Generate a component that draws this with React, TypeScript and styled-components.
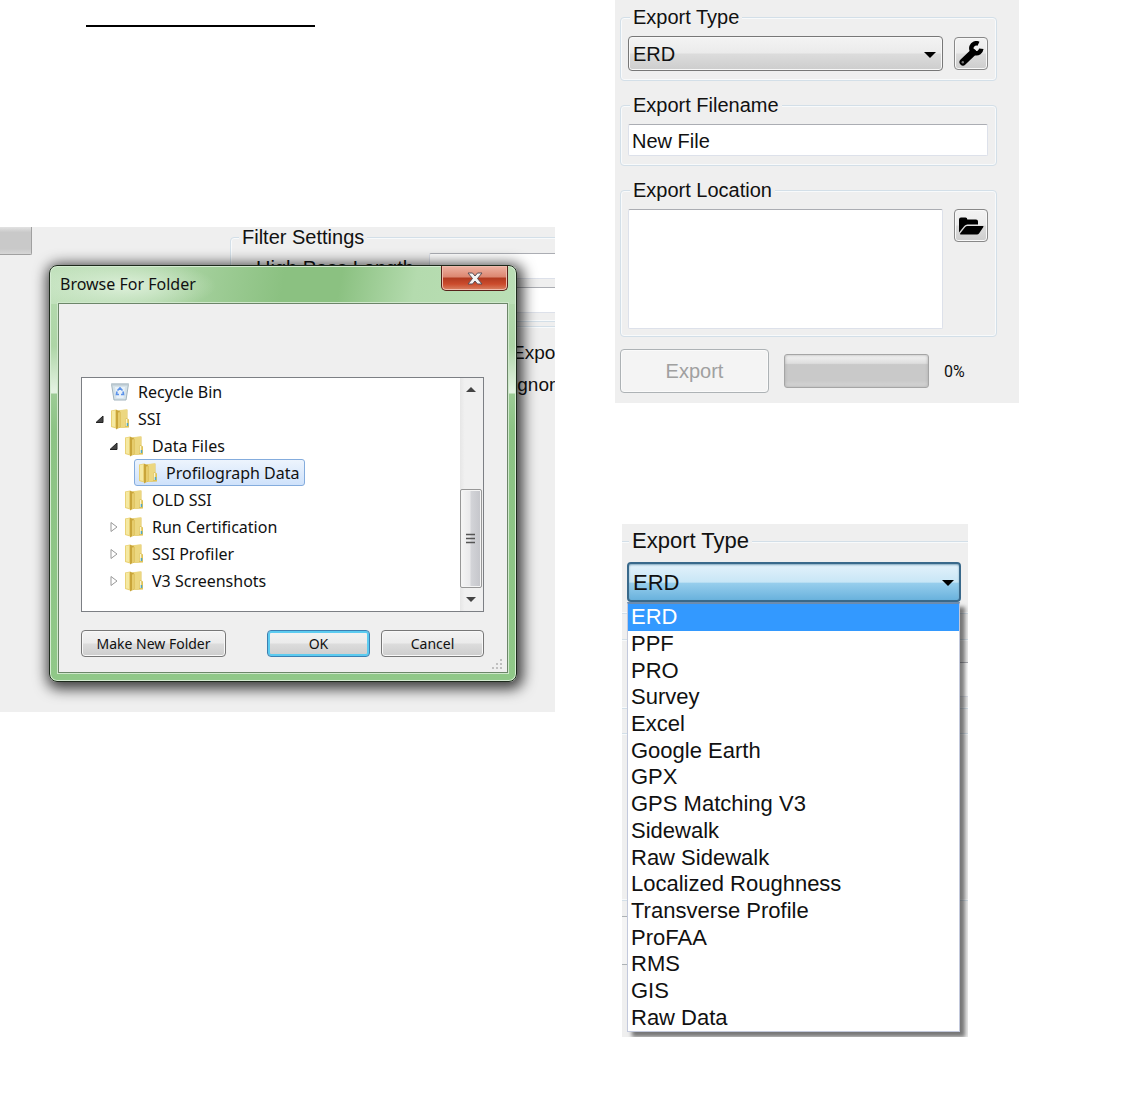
import React from "react";
import styled, { createGlobalStyle, css } from "styled-components";

const arial = `"Liberation Sans", Arial, sans-serif`;
const shell = `"Noto Sans", "Open Sans", sans-serif`;
const face = "#efefef";
const etched = "#d3dfe8";

const GlobalStyle = createGlobalStyle`
  *, *::before, *::after { box-sizing: border-box; }
  body { margin: 0; background: #fff; color: #111; font-family: ${arial}; }
  button, input, select, textarea { font: inherit; color: inherit; margin: 0; }
`;

const Page = styled.main`
  display: grid;
  grid-template-columns: minmax(0, 555fr) minmax(0, 528fr);
  column-gap: 60px;
  align-items: start;
`;

const Column = styled.div`
  display: flex;
  flex-direction: column;
`;

/* ---------- shared form parts ---------- */

const Group = styled.fieldset<{ $pad?: string }>`
  margin: 0;
  min-width: 0;
  padding: ${(p) => p.$pad ?? "7px 8px 9px 7px"};
  border: 1px solid ${etched};
  border-radius: 4px;
  box-shadow: inset 0 0 0 1px #f8fafb;
`;

const Legend = styled.legend<{ $size?: number; $inset?: number }>`
  margin-left: ${(p) => p.$inset ?? 2}px;
  padding: 0 3px;
  background: ${face};
  font-size: ${(p) => p.$size ?? 20}px;
  line-height: 24px;
  white-space: nowrap;
`;

const raised = css`
  border: 1px solid #777;
  background: linear-gradient(#f3f3f3, #ebebeb 48%, #dcdcdc 52%, #cdcdcd);
  box-shadow: inset 0 0 0 1px #f8f8f8;
`;

const sunken = css`
  border: 1px solid #dde1ea;
  border-top-color: #abadb3;
  border-radius: 2px;
  background: #fff;
`;

const Row = styled.div<{ $top?: boolean }>`
  display: flex;
  align-items: ${(p) => (p.$top ? "flex-start" : "center")};
  gap: 11px;
`;

const ComboBox = styled.div`
  position: relative;
  flex: 1;
  min-width: 0;
`;

const Combo = styled.select<{ $open?: boolean }>`
  display: block;
  width: 100%;
  height: ${(p) => (p.$open ? 40 : 35)}px;
  padding: 0 4px;
  appearance: none;
  border-radius: 4px;
  font-size: ${(p) => (p.$open ? 22 : 20)}px;
  outline: none;
  ${raised}
  ${(p) =>
    p.$open &&
    css`
      border: 2px solid #39698b;
      background: linear-gradient(#e3f2fb, #c8e6f6 50%, #96cdec 54%, #69b2dd);
      box-shadow: inset 0 1px 2px #7fa6bd;
    `}
`;

const Caret = styled.svg`
  position: absolute;
  right: 7px;
  top: 50%;
  width: 12px;
  height: 6px;
  margin-top: -2px;
  pointer-events: none;
`;

const IconButton = styled.button`
  ${raised}
  display: flex;
  align-items: center;
  justify-content: center;
  flex: none;
  width: 34px;
  height: 33px;
  padding: 0;
  border-radius: 4px;
  border-color: #888;
`;

/* ---------- export panel ---------- */

const ExportPanel = styled.form`
  display: flex;
  flex-direction: column;
  gap: 12px;
  max-width: 404px;
  padding: 5px 22px 10px 5px;
  background: ${face};
`;

const TextBox = styled.input`
  ${sunken}
  display: block;
  width: 100%;
  height: 32px;
  padding: 2px 3px 0;
  font-size: 20px;
`;

const TextArea = styled.textarea`
  ${sunken}
  display: block;
  flex: 1;
  min-width: 0;
  height: 120px;
  resize: none;
`;

const ExportRow = styled.div`
  display: flex;
  align-items: center;
  gap: 15px;
`;

const ExportButton = styled.button`
  width: 149px;
  height: 44px;
  border: 1px solid #adb2b5;
  border-radius: 4px;
  background: #f4f4f4;
  box-shadow: inset 0 0 0 1px #fafafa;
  font-size: 20px;
  color: #a0a0a0;
`;

const Meter = styled.div`
  width: 145px;
  height: 34px;
  border: 1px solid #a5a5a5;
  border-radius: 3px;
  background: linear-gradient(#f4f4f4, #dedede 26%, #c9c9c9 30%, #c9c9c9 80%, #d6d6d6);
  box-shadow: inset 0 0 3px #aaa;
`;

const Percent = styled.span`
  font-family: Roboto, ${arial};
  font-size: 16px;
`;

/* ---------- open drop-down ---------- */

const DropPanel = styled.section`
  display: flex;
  flex-direction: column;
  gap: 1px;
  max-width: 346px;
  margin: 121px 0 0 7px;
  height: 513px;
  padding-top: 5px;
  overflow: hidden;
  background: ${face};
`;

const WideGroup = styled(Group)`
  position: relative;
  z-index: 1;
  margin: 0 -8px 24px -4px;
`;

const EmptyGroup = styled.div<{ $height: number }>`
  flex: none;
  height: ${(p) => p.$height}px;
  margin: 0 -8px 23px;
  padding: 22px 0 0 16px;
  border: 1px solid ${etched};
  box-shadow: inset 0 0 0 1px #f8fafb;
`;

const HiddenField = styled.div`
  ${sunken}
  height: 35px;
`;

const HiddenButton = styled.div`
  flex: none;
  width: 160px;
  height: 49px;
  margin: -9px 0 0 -8px;
  border: 1px solid #adb2b5;
  background: #f4f4f4;
`;

const Options = styled.ul`
  position: absolute;
  top: 100%;
  left: 0;
  right: 1px;
  display: flex;
  flex-direction: column;
  height: 430px;
  margin: 0;
  padding: 0;
  list-style: none;
  border: 1px solid #c3c9dc;
  border-top: 2px solid #6b8cb0;
  background: #fff;
  box-shadow: 5px 5px 4px rgba(0, 0, 0, 0.5);
`;

const Option = styled.li<{ $selected: boolean }>`
  display: flex;
  flex: 1;
  align-items: center;
  padding-left: 3px;
  font-size: 22px;
  line-height: 26px;
  color: ${(p) => (p.$selected ? "#fff" : "#111")};
  background: ${(p) => (p.$selected ? "#3399ff" : "transparent")};
`;

/* ---------- browse dialog ---------- */

const Rule = styled.hr`
  width: 229px;
  height: 2px;
  margin: 25px 0 0 86px;
  border: 0;
  background: #000;
`;

const Backdrop = styled.section`
  position: relative;
  display: flex;
  align-items: flex-start;
  height: 485px;
  margin-top: 200px;
  overflow: hidden;
  background: ${face};
`;

const MeterEnd = styled.div`
  flex: none;
  width: 32px;
  height: 28px;
  border: 1px solid #a0a0a0;
  border-width: 0 1px 1px 0;
  border-radius: 0 0 2px 0;
  background: linear-gradient(#e2e2e2, #c9c9c9 20%, #c9c9c9 80%, #d6d6d6);
`;

const Behind = styled.div`
  flex: none;
  width: 400px;
  margin: -2px 0 0 198px;
  font-size: 20px;
`;

const FilterRow = styled.label`
  display: grid;
  grid-template-columns: 173px 1fr;
  align-items: center;
  margin: 0 0 8px 25px;
  line-height: 26px;
  white-space: nowrap;
`;

const FilterLabel = styled.span`
  padding-top: 4px;
  line-height: 22px;
`;

const FilterInput = styled.input`
  ${sunken}
  width: 100%;
  height: 26px;
`;

const SideOptions = styled.div`
  margin-top: 4px;
  padding: 10px 0 0 282px;
  border-top: 1px solid ${etched};
  box-shadow: inset 0 1px 0 #f8fafb;
  font-size: 19px;
  line-height: 32px;
`;

const Dialog = styled.div`
  position: absolute;
  left: 49px;
  right: 38px;
  top: 38px;
  display: flex;
  flex-direction: column;
  padding: 0 8px 8px;
  border: 1px solid #1d2a1c;
  border-radius: 8px;
  background:
    radial-gradient(ellipse 90px 26px at 76px 20px, #dcefd9, transparent),
    linear-gradient(100deg, #c3e2be, #b0d7a9 22%, #8bc181 50%, #8bc181 62%, #b4dbae 78%, #bbdfb6) top / 100% 38px no-repeat,
    linear-gradient(#b7dcb1, #add5a6 80px, #e4f2e2 125px, #e4f2e2 127px, #9ccb95 128px, #8cc384 165px, #90c888);
  box-shadow:
    inset 0 0 0 1px #d5ecd2,
    2px 3px 14px 4px rgba(0, 0, 0, 0.75);
  font-family: ${shell};
  font-size: 16px;
`;

const TitleBar = styled.header`
  display: flex;
  justify-content: space-between;
  align-items: flex-start;
  height: 37px;
  padding-left: 2px;
`;

const Title = styled.h2`
  margin: 0;
  font-size: 16px;
  font-weight: 400;
  line-height: 36px;
`;

const CloseButton = styled.button`
  display: flex;
  align-items: center;
  justify-content: center;
  width: 67px;
  height: 25px;
  padding: 0;
  border: 1px solid #57221a;
  border-top: 0;
  border-radius: 0 0 5px 5px;
  background: linear-gradient(#eeb3a3, #dc8670 46%, #b13a20 50%, #cb4b2c 75%, #d98465);
  box-shadow: inset 0 0 0 1px #f0bcae;
`;

const Client = styled.div`
  display: flex;
  flex-direction: column;
  gap: 18px;
  padding: 73px 23px 15px 22px;
  border: 1px solid #6c8669;
  outline: 1px solid #cfe8cb;
  background: ${face};
  position: relative;
`;

const TreeBox = styled.div`
  display: flex;
  height: 235px;
  border: 1px solid #7c7f84;
  background: #fff;
`;

const Tree = styled.ul`
  flex: 1;
  min-width: 0;
  margin: 0;
  padding: 0;
  list-style: none;
`;

const Node = styled.li<{ $level: number }>`
  display: flex;
  align-items: center;
  height: 27px;
  padding-left: ${(p) => 12 + p.$level * 14}px;
`;

const Twisty = styled.svg`
  flex: none;
  width: 12px;
  height: 12px;
`;

const NodeLabel = styled.span<{ $selected?: boolean }>`
  display: flex;
  align-items: center;
  gap: 8px;
  height: 27px;
  padding: 0 4px 0 3px;
  border: 1px solid ${(p) => (p.$selected ? "#84acdd" : "transparent")};
  border-radius: 3px;
  background: ${(p) => (p.$selected ? "linear-gradient(#edf4fd, #cfe2fb)" : "none")};
  line-height: 24px;
  white-space: nowrap;
`;

const Glyph = styled.svg`
  flex: none;
  width: 20px;
  height: 22px;
`;

const ScrollBar = styled.div`
  display: flex;
  flex-direction: column;
  width: 23px;
  padding-right: 1px;
  background: linear-gradient(90deg, #e6e6e6, #f0f0f0 20%);
`;

const ScrollButton = styled.button`
  display: flex;
  align-items: center;
  justify-content: center;
  height: 23px;
  padding: 0;
  border: 0;
  background: transparent;
`;

const ScrollTrack = styled.div`
  display: flex;
  flex: 1;
  align-items: flex-end;
`;

const Thumb = styled.div`
  display: flex;
  align-items: center;
  justify-content: center;
  width: 100%;
  height: 99px;
  border: 1px solid #979797;
  border-radius: 2px;
  background: linear-gradient(90deg, #f5f5f5, #e9e9eb 45%, #d3d4d8 50%, #c4c5ca);
  box-shadow: inset 0 0 0 1px #f4f4f4;
`;

const Actions = styled.div`
  display: flex;
  gap: 11px;
`;

const Button = styled.button<{ $primary?: boolean; $wide?: boolean }>`
  ${raised}
  width: ${(p) => (p.$wide ? 145 : 103)}px;
  height: 27px;
  padding: 0;
  border-radius: 4px;
  font-size: 14px;
  line-height: 20px;
  white-space: nowrap;
  margin-right: ${(p) => (p.$wide ? "auto" : "0")};
  ${(p) =>
    p.$primary &&
    css`
      border-color: #3c7fb1;
      box-shadow: inset 0 0 0 2px #5ccbf0;
    `}
`;

const Grip = styled.svg`
  position: absolute;
  right: 4px;
  bottom: 2px;
  width: 12px;
  height: 12px;
`;

const DownCaret = () => (
  <Caret viewBox="0 0 12 6" aria-hidden="true">
    <path d="M0 0h12L6 6z" fill="#000" />
  </Caret>
);

const WrenchIcon = () => (
  <svg width="26" height="26" viewBox="0 0 26 26" aria-hidden="true">
    <path d="M5 21 15 11.500" stroke="#000" strokeWidth="7" strokeLinecap="round" />
    <path d="M20.500 2.700A5 5 0 1 0 23.300 7.800" fill="none" stroke="#000" strokeWidth="4.500" />
    <circle cx="4.800" cy="21.200" r="1.200" fill="#777" />
  </svg>
);

const OpenFolderIcon = () => (
  <svg width="26" height="20" viewBox="0 0 26 20" aria-hidden="true">
    <path
      d="M1 3.500Q1 1.500 3 1.500H7.500Q9.300 1.500 9.300 3.500H18Q20 3.500 20 5.500V8.500H9.500Q7.500 8.500 6.300 10L1 16.500z"
      fill="#000"
    />
    <path d="M9.500 10H25Q26 10 25.200 11.200L21 17.500Q20.300 18.500 19 18.500H2.500Q1.500 18.300 2.300 17.300L7 11.300Q8 10 9.500 10z" fill="#000" />
  </svg>
);

const FolderIcon = () => (
  <Glyph viewBox="0 0 20 22" aria-hidden="true">
    <path d="M7 2.500 17.500 1.500v9l1.500 1v8L8 20z" fill="#dfc258" />
    <path d="M10 2l7-.500V10l-2 1v8l-5 1z" fill="#ecd780" />
    <path d="M1 2.500 6 1.500v19L1 19z" fill="#ead276" />
    <path d="M6 1.500 10.500 4v15L6 21.500z" fill="#c9a53a" />
    <path d="M2 3l3-.500V19l-3-.700z" fill="#f5e9a2" />
    <path d="M8 4.500 10.500 4v15L8 20.500z" fill="#e6cc6c" />
    <path d="M16.500 11v7" stroke="#f9f4d0" strokeWidth="1.500" />
    <path d="M17.500 15v3" stroke="#4fa8c8" strokeWidth="1.500" />
  </Glyph>
);

const BinIcon = () => (
  <Glyph viewBox="0 0 20 22" aria-hidden="true">
    <path d="M1.500 3h17l-2.500 16H4z" fill="#d5e2e9" stroke="#a3b4bd" />
    <path d="M1 2.500h18v2H1z" fill="#b9c7cf" />
    <path d="M5 6h10l-1.500 11h-7z" fill="#e8f1f8" />
    <path
      d="M7.500 9.500 10 7l2.500 2.500M13 10.500l.5 3H11M9 13.500H6.500l.5-3"
      fill="none"
      stroke="#5b92ea"
      strokeWidth="1.600"
    />
  </Glyph>
);

type TreeItem = {
  name: string;
  level: number;
  state?: "open" | "closed";
  bin?: boolean;
  selected?: boolean;
};

const tree: TreeItem[] = [
  { name: "Recycle Bin", level: 0, bin: true },
  { name: "SSI", level: 0, state: "open" },
  { name: "Data Files", level: 1, state: "open" },
  { name: "Profilograph Data", level: 2, selected: true },
  { name: "OLD SSI", level: 1 },
  { name: "Run Certification", level: 1, state: "closed" },
  { name: "SSI Profiler", level: 1, state: "closed" },
  { name: "V3 Screenshots", level: 1, state: "closed" },
];

const exportTypes = [
  "ERD",
  "PPF",
  "PRO",
  "Survey",
  "Excel",
  "Google Earth",
  "GPX",
  "GPS Matching V3",
  "Sidewalk",
  "Raw Sidewalk",
  "Localized Roughness",
  "Transverse Profile",
  "ProFAA",
  "RMS",
  "GIS",
  "Raw Data",
];

function BrowseDialog() {
  return (
    <Dialog role="dialog" aria-labelledby="browse-title">
      <TitleBar>
        <Title id="browse-title">Browse For Folder</Title>
        <CloseButton type="button" aria-label="Close">
          <svg width="16" height="13" viewBox="0 0 16 13" aria-hidden="true">
            <path
              d="M1 1h4.500L8 4l2.500-3H15l-4.500 5.500L15 12h-4.500L8 9l-2.500 3H1l4.500-5.500z"
              fill="#f4f4f4"
              stroke="#5b4f56"
            />
          </svg>
        </CloseButton>
      </TitleBar>
      <Client>
        <TreeBox>
          <Tree role="tree" aria-label="Folders">
            {tree.map((item) => (
              <Node key={item.name} role="treeitem" $level={item.level} aria-selected={!!item.selected}>
                <Twisty viewBox="0 0 12 12" aria-hidden="true">
                  {item.state === "open" && <path d="M9 3v6.500H2z" fill="#444" stroke="#222" />}
                  {item.state === "closed" && <path d="M3 1.500v9L9 6z" fill="#fff" stroke="#999" />}
                </Twisty>
                <NodeLabel $selected={item.selected}>
                  {item.bin ? <BinIcon /> : <FolderIcon />}
                  {item.name}
                </NodeLabel>
              </Node>
            ))}
          </Tree>
          <ScrollBar>
            <ScrollButton type="button" aria-label="Scroll up">
              <svg width="10" height="5" viewBox="0 0 10 5" aria-hidden="true">
                <path d="M0 5 5 0l5 5z" fill="#444" />
              </svg>
            </ScrollButton>
            <ScrollTrack>
              <Thumb>
                <svg width="10" height="11" viewBox="0 0 10 11" aria-hidden="true">
                  <path d="M0 1.500h9M0 5.500h9M0 9.500h9" stroke="#555" strokeWidth="1.500" />
                </svg>
              </Thumb>
            </ScrollTrack>
            <ScrollButton type="button" aria-label="Scroll down">
              <svg width="10" height="5" viewBox="0 0 10 5" aria-hidden="true">
                <path d="M0 0h10L5 5z" fill="#444" />
              </svg>
            </ScrollButton>
          </ScrollBar>
        </TreeBox>
        <Actions>
          <Button type="button" $wide>
            Make New Folder
          </Button>
          <Button type="button" $primary>
            OK
          </Button>
          <Button type="button">Cancel</Button>
        </Actions>
        <Grip viewBox="0 0 12 12" aria-hidden="true">
          <path
            d="M9 1h2v2H9zM5 5h2v2H5zM9 5h2v2H9zM1 9h2v2H1zM5 9h2v2H5zM9 9h2v2H9z"
            fill="#c0c0c0"
          />
        </Grip>
      </Client>
    </Dialog>
  );
}

export default function App() {
  return (
    <>
      <GlobalStyle />
      <Page>
        <Column>
          <Rule />
          <Backdrop>
            <MeterEnd />
            <Behind>
              <Group $pad="4px 0 0 0">
                <Legend $inset={8}>Filter Settings</Legend>
                <FilterRow>
                  <FilterLabel>High Pass Length</FilterLabel>
                  <FilterInput />
                </FilterRow>
                <FilterRow>
                  <span />
                  <FilterInput aria-label="Low Pass" />
                </FilterRow>
              </Group>
              <SideOptions>
                <div>Expo</div>
                <div>Ignor</div>
              </SideOptions>
            </Behind>
            <BrowseDialog />
          </Backdrop>
        </Column>

        <Column>
          <ExportPanel onSubmit={(e) => e.preventDefault()}>
            <Group>
              <Legend>Export Type</Legend>
              <Row>
                <ComboBox>
                  <Combo aria-label="Export Type" defaultValue="ERD">
                    <option>ERD</option>
                  </Combo>
                  <DownCaret />
                </ComboBox>
                <IconButton type="button" aria-label="Export options">
                  <WrenchIcon />
                </IconButton>
              </Row>
            </Group>
            <Group>
              <Legend>Export Filename</Legend>
              <TextBox aria-label="Export Filename" defaultValue="New File" />
            </Group>
            <Group $pad="7px 8px 7px 7px">
              <Legend>Export Location</Legend>
              <Row $top>
                <TextArea aria-label="Export Location" />
                <IconButton type="button" aria-label="Browse">
                  <OpenFolderIcon />
                </IconButton>
              </Row>
            </Group>
            <ExportRow>
              <ExportButton type="submit" disabled>
                Export
              </ExportButton>
              <Meter role="progressbar" aria-label="Export progress" aria-valuenow={0} />
              <Percent>0%</Percent>
            </ExportRow>
          </ExportPanel>

          <DropPanel>
            <WideGroup $pad="9px 14px 11px 8px">
              <Legend $size={22}>Export Type</Legend>
              <ComboBox>
                <Combo $open aria-label="Export Type list" defaultValue="ERD">
                  <option>ERD</option>
                </Combo>
                <DownCaret />
                <Options role="listbox" aria-label="Export types">
                  {exportTypes.map((name, i) => (
                    <Option key={name} role="option" aria-selected={i === 0} $selected={i === 0}>
                      {name}
                    </Option>
                  ))}
                </Options>
              </ComboBox>
            </WideGroup>
            <EmptyGroup $height={70}>
              <HiddenField />
            </EmptyGroup>
            <EmptyGroup $height={168} />
            <HiddenButton />
          </DropPanel>
        </Column>
      </Page>
    </>
  );
}
